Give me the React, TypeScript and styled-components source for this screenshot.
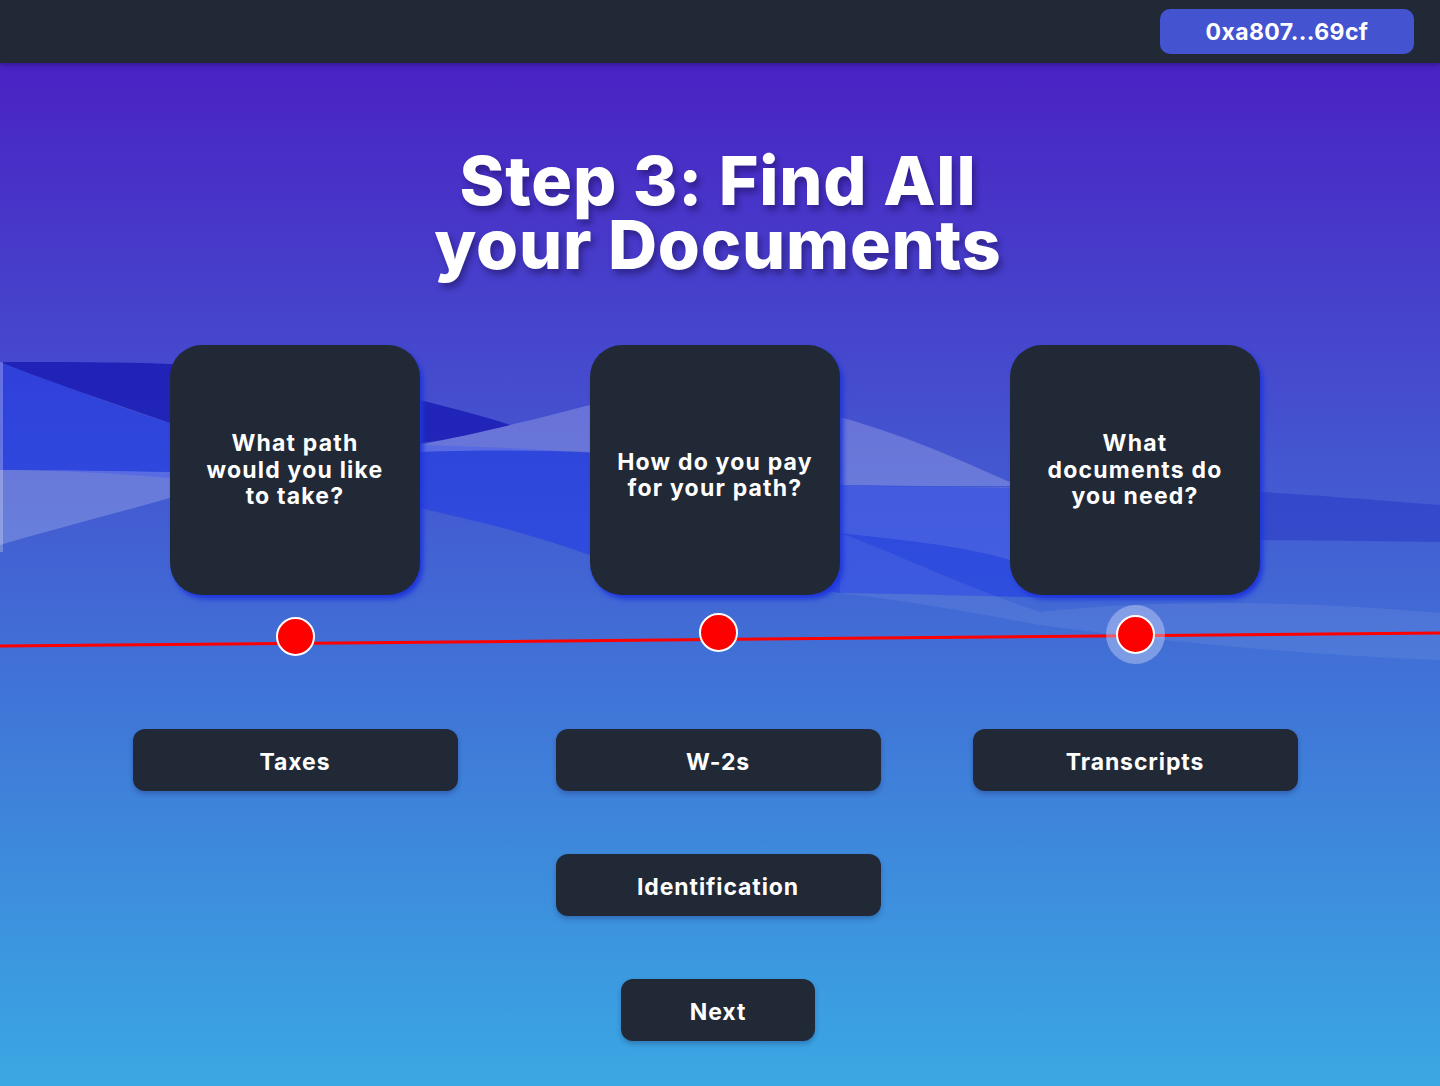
import React from "react";
import styled, { createGlobalStyle } from "styled-components";

const GlobalStyle = createGlobalStyle`
  html, body { margin: 0; padding: 0; }
  body { font-family: Inter, "Open Sans", "Liberation Sans", sans-serif; }
  * { box-sizing: border-box; }
`;

const Page = styled.div`
  position: relative;
  min-height: 1086px;
  width: 100%;
  overflow: hidden;
  background: linear-gradient(to bottom, #4a22c4 63px, #3aa8e3 1086px);
  font-family: Inter, "Open Sans", "Liberation Sans", sans-serif;
  color: #ffffff;
`;

const WaveLayer = styled.svg`
  position: absolute;
  top: 0;
  left: 0;
  width: 1440px;
  height: 1086px;
  pointer-events: none;
`;

const Header = styled.header`
  position: relative;
  z-index: 2;
  height: 63px;
  background: #222936;
  display: flex;
  align-items: center;
  justify-content: flex-end;
  padding: 0 26px 0 0;
  box-shadow: 0 2px 5px rgba(20, 10, 80, 0.45);
`;

const WalletButton = styled.button`
  width: 254px;
  height: 45px;
  border: none;
  border-radius: 10px;
  background: #4453cf;
  color: #ffffff;
  font-family: inherit;
  font-weight: 700;
  font-size: 23px;
  letter-spacing: 0.4px;
  cursor: pointer;
`;

const Main = styled.main`
  position: relative;
  z-index: 1;
  display: flex;
  flex-direction: column;
  align-items: center;
`;

const Title = styled.h1`
  margin: 85px 0 0 -4px;
  font-size: 68px;
  line-height: 64px;
  font-weight: 800;
  text-align: center;
  letter-spacing: 0.8px;
  text-shadow: 3px 5px 6px rgba(20, 10, 70, 0.45);
`;

const CardRow = styled.div`
  margin: 69px 10px 0 0;
  display: grid;
  grid-template-columns: repeat(3, 250px);
  column-gap: 170px;
`;

const QuestionCard = styled.div<{ $lift: number }>`
  width: 250px;
  height: 250px;
  border-radius: 32px;
  background: #222936;
  box-shadow: 3px 4px 5px #1e36dc;
  display: flex;
  align-items: center;
  justify-content: center;
  text-align: center;
  padding: ${(p) => p.$lift}px 10px 0;
  font-weight: 700;
  font-size: 23px;
  line-height: 26.5px;
  letter-spacing: 1.2px;
`;

const Timeline = styled.div`
  position: relative;
  width: 1440px;
  height: 40px;
  margin-top: 19px;
  display: flex;
  justify-content: center;
`;

const TimelineLine = styled.svg`
  position: absolute;
  inset: 0;
  width: 100%;
  height: 100%;
`;

const DotRow = styled.div`
  position: relative;
  display: grid;
  grid-template-columns: repeat(3, 250px);
  column-gap: 170px;
  margin-right: 10px;
`;

const DotCell = styled.div<{ $shift: number; $dy: number }>`
  display: flex;
  justify-content: center;
  align-items: center;
  height: 40px;
  transform: translate(${(p) => p.$shift}px, ${(p) => p.$dy}px);
`;

const Dot = styled.div<{ $active?: boolean }>`
  width: 39px;
  height: 39px;
  border-radius: 50%;
  background: #ff0000;
  border: 2px solid #ffffff;
  box-shadow: ${(p) => (p.$active ? "0 0 0 10px rgba(220, 230, 255, 0.38)" : "none")};
`;

const ChoiceGrid = styled.div`
  margin: 75px 10px 0 0;
  display: grid;
  grid-template-columns: 325px 325px 325px;
  column-gap: 95px;
`;

const ChoiceButton = styled.button<{ $width?: number; $nudge?: number }>`
  width: ${(p) => p.$width ?? 325}px;
  height: 62px;
  margin-left: ${(p) => p.$nudge ?? 0}px;
  border: none;
  border-radius: 12px;
  background: #222936;
  color: #ffffff;
  font-family: inherit;
  font-weight: 700;
  font-size: 23px;
  line-height: 62px;
  padding: 2px 0 0;
  letter-spacing: 0.9px;
  box-shadow: 0 3px 5px rgba(20, 30, 90, 0.3);
  cursor: pointer;
`;

const SingleRow = styled.div<{ $gap: number }>`
  margin-top: ${(p) => p.$gap}px;
  margin-left: -4px;
  display: flex;
  justify-content: center;
`;

const questions = [
  { lines: ["What path", "would you like", "to take?"], lift: 0 },
  { lines: ["How do you pay", "for your path?"], lift: 10 },
  { lines: ["What", "documents do", "you need?"], lift: 0 },
];

const dots = [
  { dx: 0, dy: 2, active: false },
  { dx: 3, dy: -2, active: false },
  { dx: 0, dy: 0, active: true },
];

export default function App() {
  return (
    <>
      <GlobalStyle />
      <Page>
        <WaveLayer viewBox="0 0 1440 1086" preserveAspectRatio="none">
          <path
            d="M0,362 C80,392 140,415 170,423 C260,440 360,445 420,445 C500,447 560,450 600,454 C700,465 780,478 840,485 L1120,490 L1120,598 C1040,598 920,594 840,593 C760,580 680,570 590,555 C520,530 470,520 420,508 C330,490 240,480 170,478 C100,472 40,470 0,470 Z"
            fill="#1f3ae6"
            opacity="0.55"
          />
          <path
            d="M840,485 C900,487 960,487 1010,487 L1010,560 C960,545 900,540 840,533 Z"
            fill="#ffffff"
            opacity="0.1"
          />
          <path
            d="M840,533 C900,555 960,585 1040,612 C1150,600 1300,600 1440,613 L1440,660 C1300,655 1150,640 1040,625 C960,610 900,600 840,593 Z"
            fill="#ffffff"
            opacity="0.07"
          />
          <path
            d="M0,470 C60,470 120,471 170,472 C260,460 360,450 420,445 C460,436 490,430 510,425 C540,418 570,410 590,405 C700,395 780,405 840,417 C920,440 970,465 1010,482 L1010,486 C950,486 890,486 840,485 C760,470 680,455 590,452 C530,450 470,450 420,452 C330,470 240,485 170,498 C110,515 50,530 0,545 Z"
            fill="#ffffff"
            opacity="0.2"
          />
          <path
            d="M0,362 C60,362 120,362 170,364 C280,372 370,385 420,400 C460,410 490,418 510,425 C480,432 450,440 420,443 C330,440 240,432 170,423 C110,402 50,382 0,362 Z"
            fill="#1515b0"
            opacity="0.75"
          />
          <path
            d="M1200,488 C1300,494 1380,500 1440,505 L1440,542 C1380,541 1300,540 1200,540 Z"
            fill="#2330c4"
            opacity="0.45"
          />
          <rect x="0" y="362" width="3" height="190" fill="#ffffff" opacity="0.25" />
        </WaveLayer>

        <Header>
          <WalletButton>0xa807...69cf</WalletButton>
        </Header>

        <Main>
          <Title>
            Step 3: Find All
            <br />
            your Documents
          </Title>

          <CardRow>
            {questions.map((q, i) => (
              <QuestionCard key={i} $lift={q.lift}>
                <span>
                  {q.lines.map((l, j) => (
                    <React.Fragment key={j}>
                      {l}
                      {j < q.lines.length - 1 && <br />}
                    </React.Fragment>
                  ))}
                </span>
              </QuestionCard>
            ))}
          </CardRow>

          <Timeline>
            <TimelineLine viewBox="0 0 1440 40" preserveAspectRatio="none">
              <line x1="0" y1="32" x2="1440" y2="19" stroke="#ff0000" strokeWidth="3" />
            </TimelineLine>
            <DotRow>
              {dots.map((d, i) => (
                <DotCell key={i} $shift={d.dx} $dy={d.dy}>
                  <Dot $active={d.active} />
                </DotCell>
              ))}
            </DotRow>
          </Timeline>

          <ChoiceGrid>
            <ChoiceButton>Taxes</ChoiceButton>
            <ChoiceButton $nudge={3}>W-2s</ChoiceButton>
            <ChoiceButton>Transcripts</ChoiceButton>
          </ChoiceGrid>

          <SingleRow $gap={63}>
            <ChoiceButton>Identification</ChoiceButton>
          </SingleRow>

          <SingleRow $gap={63}>
            <ChoiceButton $width={194}>Next</ChoiceButton>
          </SingleRow>
        </Main>
      </Page>
    </>
  );
}
